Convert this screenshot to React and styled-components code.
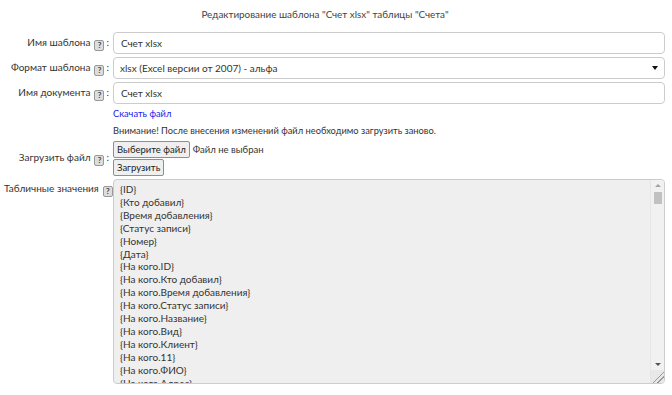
import React from 'react'
import styled, { createGlobalStyle } from 'styled-components'

const GlobalStyle = createGlobalStyle`
  html, body {
    margin: 0;
    padding: 0;
    background: #fff;
  }
  body {
    font-family: Lato, Roboto, sans-serif;
    font-size: 10px;
    color: #333;
  }
`

const Page = styled.div`
  width: 672px;
  height: 395px;
  overflow: hidden;
  padding: 0 7px 0 4px;
  box-sizing: border-box;
`

const Title = styled.h1`
  margin: 0;
  height: 32px;
  padding-right: 19px;
  line-height: 28px;
  font-size: 9.9px;
  font-weight: 400;
  text-align: center;
  color: #444;
`

const Form = styled.div`
  display: grid;
  grid-template-columns: 105px 1fr;
  column-gap: 4px;
  row-gap: 3px;
  align-items: center;
`

const Label = styled.div`
  text-align: right;
  white-space: nowrap;
  color: #333;
  align-self: ${p => (p.$top ? 'start' : 'center')};
  padding-top: ${p => (p.$top ? '3px' : '0')};
`

const Help = styled.span`
  display: inline-block;
  width: 8px;
  height: 9px;
  line-height: 9px;
  margin: 0 2px 0 4px;
  border: 1px solid #999;
  border-radius: 2px;
  background: #ddd;
  font-size: 8px;
  font-weight: 700;
  text-align: center;
  color: #444;
  vertical-align: -2px;
`

const Field = styled.div`
  position: relative;
`

const TextInput = styled.input`
  display: block;
  width: 100%;
  height: 22px;
  box-sizing: border-box;
  padding: 0 7px;
  border: 1px solid #ccc;
  border-radius: 4px;
  font: inherit;
  color: #333;
  background: #fff;
  outline: none;
`

const Select = styled.select`
  display: block;
  width: 100%;
  height: 22px;
  box-sizing: border-box;
  padding: 0 6px;
  border: 1px solid #ccc;
  border-radius: 4px;
  font: inherit;
  color: #333;
  background: #fff;
  appearance: none;
  outline: none;
`

const Arrow = styled.span`
  position: absolute;
  right: 7px;
  top: 9px;
  width: 0;
  height: 0;
  border-left: 3px solid transparent;
  border-right: 3px solid transparent;
  border-top: 4px solid #111;
  pointer-events: none;
`

const Link = styled.a`
  color: #2222ee;
  text-decoration: none;
  font-size: 9.3px;
  line-height: 14px;
`

const Note = styled.div`
  font-size: 9.3px;
  line-height: 14px;
`

const Buttons = styled.div`
  display: flex;
  flex-direction: column;
  align-items: flex-start;
  gap: 1px;
`

const FileLine = styled.div`
  display: flex;
  align-items: center;
  gap: 3px;
  font-size: 9.5px;
`

const Button = styled.button`
  height: 17px;
  padding: 0 3px;
  font: inherit;
  font-size: 9.5px;
  color: #222;
  background: #efefef;
  border: 1px solid #8f8f8f;
  border-radius: 2px;
`

const ValuesBox = styled.div`
  display: flex;
  height: 205px;
  box-sizing: border-box;
  border: 1px solid #ccc;
  border-radius: 4px;
  background: #efefef;
  overflow: hidden;
`

const Values = styled.textarea`
  flex: 1;
  min-width: 0;
  padding: 3px 6px;
  margin: 0;
  border: 0;
  background: transparent;
  font: inherit;
  line-height: 12.9px;
  color: #333;
  resize: none;
  overflow: hidden;
  outline: none;
`

const Scrollbar = styled.div`
  width: 13px;
  display: flex;
  flex-direction: column;
  align-items: center;
  background: #f1f1f1;
  border-left: 1px solid #e6e6e6;
`

const ScrollArrow = styled.div`
  width: 0;
  height: 0;
  margin: 4px 0;
  border-left: 3px solid transparent;
  border-right: 3px solid transparent;
  ${p => (p.$down ? 'border-top: 3px solid #555;' : 'border-bottom: 3px solid #a3a3a3;')}
`

const Thumb = styled.div`
  width: 8px;
  height: 12px;
  margin-top: 1px;
  background: #c1c1c1;
`

const Track = styled.div`
  flex: 1;
`

const Grip = styled.div`
  width: 13px;
  height: 13px;
  background:
    linear-gradient(135deg, transparent 55%, #999 55%, #999 61%, transparent 61%, transparent 72%, #999 72%, #999 78%, transparent 78%);
  background-color: #e8e8e8;
`

const fields = [
  'ID', 'Кто добавил', 'Время добавления', 'Статус записи', 'Номер', 'Дата',
]
const related = [
  'ID', 'Кто добавил', 'Время добавления', 'Статус записи', 'Название', 'Вид',
  'Клиент', '11', 'ФИО', 'Адрес', 'Телефон', 'Email', 'ИНН', 'КПП', 'ОГРН',
  'Банк', 'БИК', 'Расчетный счет', 'Корр. счет', 'Директор',
]

const lines = [
  ...fields.map(f => `{${f}}`),
  ...related.map(f => `{На кого.${f}}`),
]
for (let i = 1; i <= 12; i++) {
  related.forEach(f => lines.push(`{Товары.${i}.${f}}`))
}

const HelpIcon = () => <Help>?</Help>

const App = () => {
  return (
    <Page>
      <GlobalStyle />
      <Title>Редактирование шаблона "Счет xlsx" таблицы "Счета"</Title>
      <Form>
        <Label>Имя шаблона<HelpIcon />:</Label>
        <TextInput defaultValue="Счет xlsx" />

        <Label>Формат шаблона<HelpIcon />:</Label>
        <Field>
          <Select defaultValue="xlsx">
            <option value="xlsx">xlsx (Excel версии от 2007) - альфа</option>
          </Select>
          <Arrow />
        </Field>

        <Label>Имя документа<HelpIcon />:</Label>
        <TextInput defaultValue="Счет xlsx" />

        <Label />
        <Link href="#">Скачать файл</Link>

        <Label />
        <Note>Внимание! После внесения изменений файл необходимо загрузить заново.</Note>

        <Label>Загрузить файл<HelpIcon />:</Label>
        <Buttons>
          <FileLine>
            <Button>Выберите файл</Button>
            <span>Файл не выбран</span>
          </FileLine>
          <Button>Загрузить</Button>
        </Buttons>

        <Label $top>Табличные значения<HelpIcon />:</Label>
        <ValuesBox>
          <Values readOnly defaultValue={lines.join('\n')} />
          <Scrollbar>
            <ScrollArrow />
            <Thumb />
            <Track />
            <ScrollArrow $down />
            <Grip />
          </Scrollbar>
        </ValuesBox>
      </Form>
    </Page>
  )
}

export default App
